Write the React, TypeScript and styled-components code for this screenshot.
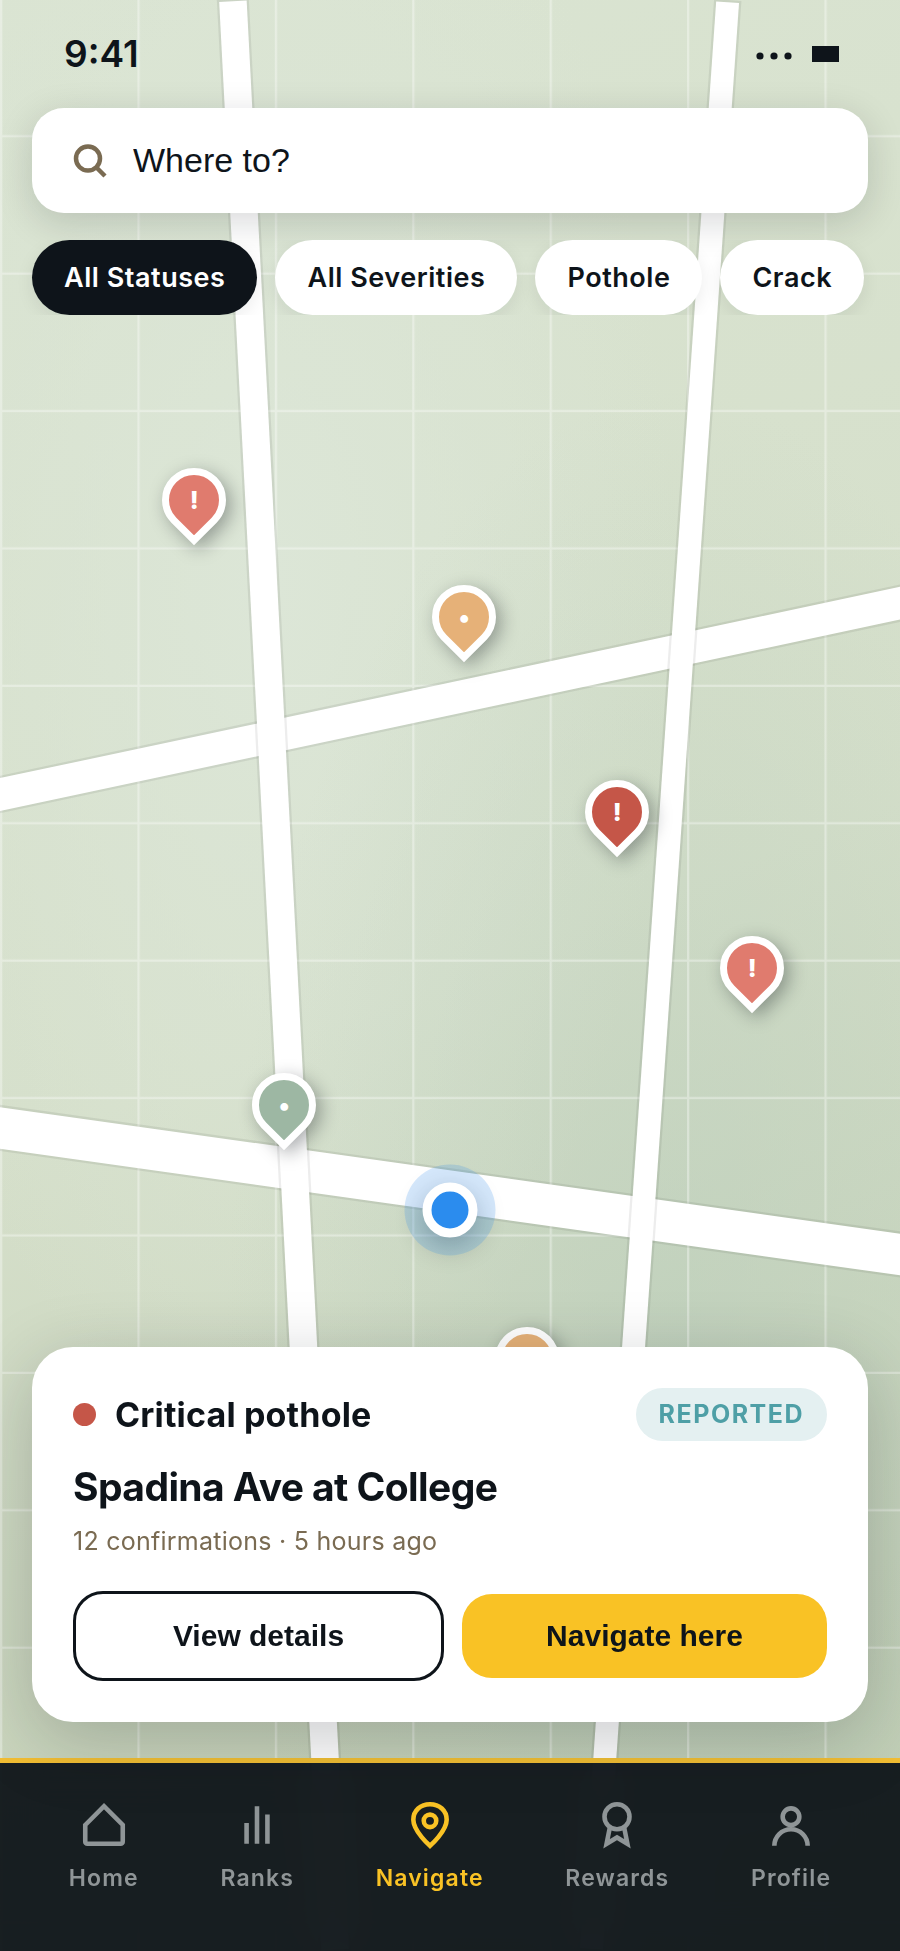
import { ReactNode } from 'react';
import styled, { createGlobalStyle } from 'styled-components';

const colors = {
  ink: '#0e141a',
  taupe: '#7a6b52',
  yellow: '#f9c225',
  critical: '#c55648',
  high: '#e07b6e',
  medium: '#e6b178',
  low: '#9db7a3',
  teal: '#4e9fa6',
  blue: '#2b8cee',
};

const filters = ['All Statuses', 'All Severities', 'Pothole', 'Crack'];

const pins = [
  { left: 18, top: 24, color: colors.high, glyph: '!' },
  { left: 48, top: 30, color: colors.medium, glyph: '•' },
  { left: 65, top: 40, color: colors.critical, glyph: '!' },
  { left: 80, top: 48, color: colors.high, glyph: '!' },
  { left: 28, top: 55, color: colors.low, glyph: '•' },
  { left: 55, top: 68, color: colors.medium, glyph: '•' },
];

const tabs: { label: string; icon: ReactNode }[] = [
  {
    label: 'Home',
    icon: <path d="M3 12l9-9 9 9v8a1 1 0 0 1-1 1H4a1 1 0 0 1-1-1z" />,
  },
  {
    label: 'Ranks',
    icon: <path d="M7 11v10M12 3v18M17 7v14" />,
  },
  {
    label: 'Navigate',
    icon: (
      <>
        <path d="M12 22s8-7 8-12.500C20 5 16.500 2 12 2S4 5 4 9.500C4 15 12 22 12 22z" />
        <circle cx="12" cy="10" r="3" />
      </>
    ),
  },
  {
    label: 'Rewards',
    icon: (
      <>
        <circle cx="12" cy="8" r="6" />
        <path d="M8.500 13.500L7 21l5-3 5 3-1.500-7.500" />
      </>
    ),
  },
  {
    label: 'Profile',
    icon: (
      <>
        <circle cx="12" cy="8" r="4" />
        <path d="M4 22a8 8 0 0 1 16 0" />
      </>
    ),
  },
];

export default function App() {
  return (
    <>
      <GlobalStyle />
      <StyledScreen>
        <StyledMap>
          <Streets />
          {pins.map((pin) => (
            <StyledPin
              key={`${pin.left}-${pin.top}`}
              type="button"
              $left={pin.left}
              $top={pin.top}
              $color={pin.color}
            >
              <span>{pin.glyph}</span>
            </StyledPin>
          ))}
          <StyledUserDot />
        </StyledMap>

        <StyledStatusBar>
          <StyledTime>9:41</StyledTime>
          <svg width="84" height="20" viewBox="0 0 84 20" aria-hidden="true">
            <circle cx="4" cy="12" r="3.600" />
            <circle cx="18" cy="12" r="3.600" />
            <circle cx="32" cy="12" r="3.600" />
            <rect x="56" y="2" width="27" height="16" />
          </svg>
        </StyledStatusBar>

        <StyledSearch>
          <svg width="34" height="34" viewBox="0 0 34 34" aria-hidden="true">
            <circle cx="15" cy="14.500" r="12" />
            <path d="M23 23l9 9" />
          </svg>
          <input type="text" placeholder="Where to?" aria-label="Where to?" />
        </StyledSearch>

        <StyledFilters>
          {filters.map((filter, i) => (
            <StyledChip key={filter} type="button" $active={i === 0}>
              {filter}
            </StyledChip>
          ))}
        </StyledFilters>

        <StyledCard>
          <StyledCardHead>
            <StyledSeverity>Critical pothole</StyledSeverity>
            <StyledBadge>REPORTED</StyledBadge>
          </StyledCardHead>
          <StyledPlace>Spadina Ave at College</StyledPlace>
          <StyledMeta>12 confirmations · 5 hours ago</StyledMeta>
          <StyledActions>
            <StyledButton type="button" $outline>
              View details
            </StyledButton>
            <StyledButton type="button">Navigate here</StyledButton>
          </StyledActions>
        </StyledCard>

        <StyledTabBar>
          {tabs.map(({ label, icon }) => (
            <StyledTab key={label} href="#" $active={label === 'Navigate'}>
              <svg width="50" height="50" viewBox="0 0 24 24" aria-hidden="true">
                {icon}
              </svg>
              {label}
            </StyledTab>
          ))}
        </StyledTabBar>
      </StyledScreen>
    </>
  );
}

function Streets() {
  return (
    <StyledStreets
      viewBox="0 0 393 852"
      preserveAspectRatio="xMidYMid slice"
      aria-hidden="true"
    >
      <defs>
        <linearGradient
          id="land"
          gradientUnits="userSpaceOnUse"
          x1="30"
          y1="0"
          x2="363"
          y2="852"
        >
          <stop offset="0" stopColor="#dae4d2" />
          <stop offset="0.500" stopColor="#d5dfca" />
          <stop offset="1" stopColor="#c0cdb2" />
        </linearGradient>
        <radialGradient id="meadow" cx="0.300" cy="0.300" r="0.450">
          <stop offset="0" stopColor="#dce6d7" />
          <stop offset="1" stopColor="#dce6d7" stopOpacity="0" />
        </radialGradient>
        <radialGradient id="park" cx="0.750" cy="0.700" r="0.500">
          <stop offset="0" stopColor="#b8ccba" stopOpacity="0.550" />
          <stop offset="1" stopColor="#b8ccba" stopOpacity="0" />
        </radialGradient>
        <pattern id="blocks" width="60" height="60" patternUnits="userSpaceOnUse">
          <path d="M0 0h1v60H0zM1 59h59v1H1z" fill="#fff" fillOpacity="0.350" />
        </pattern>
      </defs>
      <rect width="393" height="852" fill="url(#land)" />
      <rect width="393" height="852" fill="url(#meadow)" />
      <rect width="393" height="852" fill="url(#park)" />
      <rect width="393" height="852" fill="url(#blocks)" />
      <g fill="#fff" stroke="#000" strokeOpacity="0.070" strokeWidth="2" paintOrder="stroke">
        <rect x="-80" y="298.200" width="553" height="14" transform="rotate(-12 196.500 305.200)" />
        <rect x="-80" y="511.200" width="553" height="18" transform="rotate(8 196.500 520.200)" />
        <rect x="118" y="0" width="12" height="852" transform="rotate(-3 124 426)" />
        <rect x="283" y="0" width="10" height="852" transform="rotate(4 288 426)" />
      </g>
    </StyledStreets>
  );
}

const GlobalStyle = createGlobalStyle`
  * {
    box-sizing: border-box;
  }

  body {
    margin: 0;
    color: ${colors.ink};
    font-family: Inter, sans-serif;
  }

  button {
    border: 0;
    padding: 0;
    color: inherit;
    font-family: inherit;
    cursor: pointer;
  }
`;

const StyledScreen = styled.div`
  position: relative;
  min-height: 100vh;
  display: flex;
  flex-direction: column;
  overflow: hidden;
`;

const StyledMap = styled.div`
  position: absolute;
  inset: 0;
`;

const StyledStreets = styled.svg`
  display: block;
  width: 100%;
  height: 100%;
`;

const StyledPin = styled.button<{ $left: number; $top: number; $color: string }>`
  position: absolute;
  left: ${({ $left }) => $left}%;
  top: ${({ $top }) => $top}%;
  width: 64px;
  height: 64px;
  display: grid;
  place-items: center;
  background: ${({ $color }) => $color};
  border: 7px solid #fff;
  border-radius: 50% 50% 50% 0;
  box-shadow: 0 7px 18px rgba(14, 20, 26, 0.35);
  transform: rotate(-45deg);

  span {
    color: #fff;
    font-size: 25px;
    font-weight: 800;
    line-height: 28px;
    transform: rotate(45deg);
  }
`;

const StyledUserDot = styled.div`
  position: absolute;
  left: 50%;
  top: 62%;
  width: 55px;
  height: 55px;
  background: ${colors.blue};
  border: 9px solid #fff;
  border-radius: 50%;
  box-shadow:
    0 0 0 18px rgba(43, 140, 238, 0.2),
    0 9px 28px rgba(14, 20, 26, 0.3);
  transform: translate(-50%, -50%);
`;

const StyledStatusBar = styled.div`
  position: relative;
  height: 108px;
  display: flex;
  align-items: center;
  justify-content: space-between;
  padding: 0 60px 0 64px;

  svg {
    fill: ${colors.ink};
  }
`;

const StyledTime = styled.span`
  font-size: 37px;
  font-weight: 600;
  line-height: 44px;
`;

const StyledSearch = styled.label`
  position: relative;
  height: 105px;
  display: flex;
  align-items: center;
  gap: 26px;
  margin: 0 32px;
  padding: 0 41px;
  background: #fff;
  border-radius: 32px;
  box-shadow: 0 9px 37px rgba(14, 20, 26, 0.16);

  svg {
    flex: none;
    fill: none;
    stroke: ${colors.taupe};
    stroke-width: 4.5;
  }

  input {
    flex: 1;
    min-width: 0;
    padding: 0;
    border: 0;
    outline: 0;
    background: none;
    font-family: 'Liberation Sans', Arial, sans-serif;
    font-size: 34px;

    &::placeholder {
      color: ${colors.ink};
    }
  }
`;

const StyledFilters = styled.div`
  position: relative;
  display: flex;
  gap: 18px;
  margin: 27px 0 0;
  padding: 0 32px;
  overflow-x: auto;
  scrollbar-width: none;
`;

const StyledChip = styled.button<{ $active: boolean }>`
  flex: none;
  height: 75px;
  padding: 0 32px;
  background: ${({ $active }) => ($active ? colors.ink : '#fff')};
  color: ${({ $active }) => ($active ? '#fff' : colors.ink)};
  border-radius: 38px;
  box-shadow: 0 5px 18px rgba(14, 20, 26, 0.08);
  font-size: 27px;
  font-weight: 600;
  letter-spacing: 0.02em;
  line-height: 32px;
`;

const StyledCard = styled.section`
  position: relative;
  z-index: 1;
  margin: auto 32px 36px;
  padding: 41px;
  background: #fff;
  border-radius: 41px;
  box-shadow: 0 18px 73px rgba(14, 20, 26, 0.22);
`;

const StyledCardHead = styled.div`
  display: flex;
  align-items: center;
  justify-content: space-between;
`;

const StyledSeverity = styled.span`
  display: flex;
  align-items: center;
  gap: 19px;
  font-size: 34px;
  font-weight: 700;
  letter-spacing: 0.005em;
  line-height: 42px;

  &::before {
    content: '';
    width: 23px;
    height: 23px;
    background: ${colors.critical};
    border-radius: 50%;
  }
`;

const StyledBadge = styled.span`
  padding: 11px 23px;
  background: #e4f0f1;
  color: ${colors.teal};
  border-radius: 27px;
  font-size: 25px;
  font-weight: 700;
  letter-spacing: 0.06em;
  line-height: 31px;
`;

const StyledPlace = styled.h2`
  margin: 22px 0 0;
  font-size: 39px;
  font-weight: 700;
  letter-spacing: -0.015em;
  line-height: 48px;
`;

const StyledMeta = styled.p`
  margin: 14px 0 34px;
  color: ${colors.taupe};
  font-size: 25px;
  letter-spacing: 0.01em;
  line-height: 32px;
`;

const StyledActions = styled.div`
  display: flex;
  align-items: center;
  gap: 18px;
`;

const StyledButton = styled.button<{ $outline?: boolean }>`
  box-sizing: content-box;
  flex: 1;
  height: 84px;
  background: ${({ $outline }) => ($outline ? '#fff' : colors.yellow)};
  border: ${({ $outline }) => ($outline ? `3px solid ${colors.ink}` : '0')};
  border-radius: 30px;
  font-family: 'Liberation Sans', Arial, sans-serif;
  font-size: 30px;
  font-weight: 700;
`;

const StyledTabBar = styled.nav`
  position: relative;
  height: 193px;
  display: flex;
  align-items: flex-start;
  justify-content: space-around;
  padding: 37px 28px 0;
  background: rgba(14, 20, 24, 0.95);
  border-top: 5px solid #f2be33;
  backdrop-filter: blur(20px);
`;

const StyledTab = styled.a<{ $active: boolean }>`
  display: flex;
  flex-direction: column;
  align-items: center;
  gap: 14px;
  color: ${({ $active }) => ($active ? colors.yellow : '#8f9597')};
  font-size: 23px;
  font-weight: 600;
  letter-spacing: 0.05em;
  line-height: 28px;
  text-decoration: none;

  svg {
    fill: none;
    stroke: currentColor;
    stroke-width: 2.2;
  }
`;
